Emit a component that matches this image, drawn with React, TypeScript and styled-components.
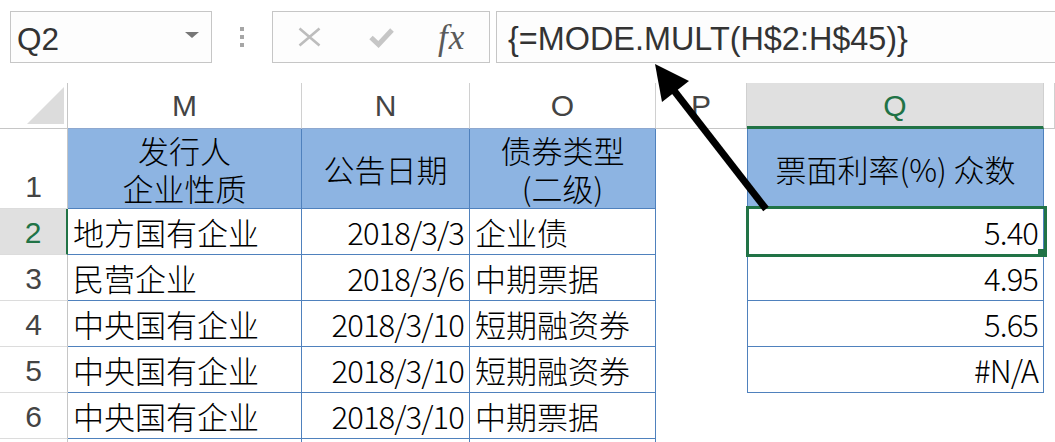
import React from "react";
import styled, { createGlobalStyle } from "styled-components";

const GlobalStyle = createGlobalStyle`
  html, body { margin: 0; padding: 0; background: #fff; }
  body { overflow: hidden; font-family: "Liberation Sans", Arial, sans-serif; }
`;

const GREEN = "#217346";
const BLUE_LINE = "#4f81bd";
const HEAD_FILL = "#8db4e2";
const CJK = `"Noto Sans CJK SC", "Noto Sans", sans-serif`;

const Page = styled.div`
  position: relative;
  width: 1055px;
  height: 442px;
  overflow: hidden;
  background: #fff;
`;

/* ---------- formula bar ---------- */
const FormulaBar = styled.div`
  display: flex;
  align-items: flex-start;
  height: 83px;
  padding: 11px 0 0 10px;
  box-sizing: border-box;
`;

const FieldBox = styled.div`
  box-sizing: border-box;
  height: 52px;
  border: 1px solid #c6c6c6;
  background: #fdfdfd;
  display: flex;
  align-items: center;
`;

const NameBox = styled(FieldBox)`
  width: 202px;
  justify-content: space-between;
  padding: 0 12px 0 6px;
`;

const BarText = styled.span<{ $size: number }>`
  font-family: "Liberation Sans", Arial, sans-serif;
  font-size: ${(p) => p.$size}px;
  line-height: 36px;
  color: #333;
  padding-top: 4px;
  white-space: nowrap;
`;

const DropTriangle = styled.span`
  width: 0;
  height: 0;
  margin-top: -4px;
  border-left: 7px solid transparent;
  border-right: 7px solid transparent;
  border-top: 6px solid #777;
`;

const Grip = styled.div`
  width: 60px;
  height: 52px;
  display: flex;
  flex-direction: column;
  align-items: center;
  justify-content: center;
  gap: 4px;
`;

const GripDot = styled.span`
  width: 4px;
  height: 4px;
  background: #a6a6a6;
`;

const FxBox = styled(FieldBox)`
  width: 218px;
  padding-left: 25px;
`;

const IconSlot = styled.span<{ $gap: number }>`
  display: flex;
  margin-right: ${(p) => p.$gap}px;
`;

const FxLabel = styled.span`
  font-family: "Liberation Serif", "Times New Roman", serif;
  font-style: italic;
  font-size: 35px;
  color: #5a5a5a;
  line-height: 34px;
  padding-top: 1px;
  letter-spacing: 1px;
`;

const FormulaBox = styled(FieldBox)`
  flex: 1;
  margin-left: 6px;
  margin-right: -10px;
  padding-left: 11px;
`;

/* ---------- sheet grid ---------- */
const Sheet = styled.div`
  display: grid;
  grid-template-columns: 68px 234px 168px 186px 91px 297px 1fr;
  grid-template-rows: 46px 80px repeat(6, 46px);
`;

const Corner = styled.div`
  box-sizing: border-box;
  border-right: 1px solid #c6c6c6;
  border-bottom: 1px solid #c6c6c6;
  display: flex;
  align-items: flex-end;
  justify-content: flex-end;
  padding: 0 3px 4px 0;
`;

const CornerTriangle = styled.span`
  width: 0;
  height: 0;
  border-left: 37px solid transparent;
  border-bottom: 37px solid #dcdcdc;
`;

const ColHead = styled.div<{ $sel?: boolean; $line?: string }>`
  box-sizing: border-box;
  display: flex;
  align-items: center;
  justify-content: center;
  font-family: "Liberation Sans", Arial, sans-serif;
  font-size: 30px;
  color: ${(p) => (p.$sel ? GREEN : "#444")};
  background: ${(p) => (p.$sel ? "#e0e0e0" : "#fff")};
  border-right: 1px solid #d0d0d0;
  border-bottom: ${(p) =>
    p.$sel ? `3px solid ${GREEN}` : `1px solid ${p.$line ?? "#c6c6c6"}`};
  padding-top: ${(p) => (p.$sel ? "2px" : "0")};
`;

const RowHead = styled.div<{ $sel?: boolean }>`
  box-sizing: border-box;
  display: flex;
  align-items: flex-end;
  justify-content: center;
  padding-bottom: 4px;
  font-family: "Liberation Sans", Arial, sans-serif;
  font-size: 30px;
  line-height: 34px;
  color: ${(p) => (p.$sel ? GREEN : "#444")};
  background: ${(p) => (p.$sel ? "#e0e0e0" : "#fff")};
  border-bottom: 1px solid #dcdcdc;
  border-right: ${(p) => (p.$sel ? `2px solid ${GREEN}` : "1px solid #c6c6c6")};
`;

type Frame = "table" | "qtable" | "none";
type Align = "left" | "right" | "center";

const Cell = styled.div<{ $frame: Frame; $align?: Align; $head?: boolean; $active?: boolean }>`
  box-sizing: border-box;
  position: ${(p) => (p.$active ? "relative" : "static")};
  display: flex;
  align-items: center;
  justify-content: ${(p) =>
    p.$align === "right" ? "flex-end" : p.$align === "center" ? "center" : "flex-start"};
  text-align: ${(p) => p.$align ?? "left"};
  padding: 0 5px;
  font-family: ${CJK};
  font-weight: 300;
  font-size: 31px;
  line-height: ${(p) => (p.$head ? "38px" : "45px")};
  white-space: pre-line;
  color: #000;
  background: ${(p) => (p.$head ? HEAD_FILL : "#fff")};
  border-right: ${(p) => (p.$frame === "none" ? "none" : `1px solid ${BLUE_LINE}`)};
  border-bottom: ${(p) => (p.$frame === "none" ? "none" : `1px solid ${BLUE_LINE}`)};
  border-left: ${(p) => (p.$frame === "qtable" ? `1px solid ${BLUE_LINE}` : "none")};
`;

const Num = styled.span`
  letter-spacing: -0.9px;
`;

const Selection = styled.div`
  position: absolute;
  z-index: 2;
  left: -2px;
  top: -3px;
  width: 301px;
  height: 51px;
  box-sizing: border-box;
  border: 3px solid ${GREEN};
  pointer-events: none;
`;

const FillHandle = styled.div`
  position: absolute;
  z-index: 3;
  right: -3px;
  bottom: -2px;
  width: 8px;
  height: 7px;
  background: ${GREEN};
`;

const ArrowLayer = styled.svg`
  position: absolute;
  left: 0;
  top: 0;
  z-index: 5;
  pointer-events: none;
`;

/* ---------- data ---------- */
const columns = [
  { key: "M", line: "#8ea8cf" },
  { key: "N", line: "#8ea8cf" },
  { key: "O", line: "#8ea8cf" },
  { key: "P" },
  { key: "Q", sel: true },
  { key: "" },
];

type Row = { n: string; m: string; d: string; t: string; q?: string };

const rows: Row[] = [
  { n: "2", m: "地方国有企业", d: "2018/3/3", t: "企业债", q: "5.40" },
  { n: "3", m: "民营企业", d: "2018/3/6", t: "中期票据", q: "4.95" },
  { n: "4", m: "中央国有企业", d: "2018/3/10", t: "短期融资券", q: "5.65" },
  { n: "5", m: "中央国有企业", d: "2018/3/10", t: "短期融资券", q: "#N/A" },
  { n: "6", m: "中央国有企业", d: "2018/3/10", t: "中期票据" },
  { n: "", m: "", d: "", t: "" },
];

const CloseIcon = () => (
  <svg width="23" height="20" viewBox="0 0 23 20">
    <path d="M1.5 1.5 L21.5 18.5 M21.5 1.5 L1.5 18.5" stroke="#bdbdbd" strokeWidth="2.6" fill="none" />
  </svg>
);

const CheckIcon = () => (
  <svg width="25" height="21" viewBox="0 0 25 21">
    <path d="M2 10.5 L9.5 17.5 L23 3" stroke="#c6c6c6" strokeWidth="5" fill="none" strokeLinejoin="miter" />
  </svg>
);

export default function App() {
  return (
    <Page>
      <GlobalStyle />
      <FormulaBar>
        <NameBox>
          <BarText $size={31.5}>Q2</BarText>
          <DropTriangle />
        </NameBox>
        <Grip>
          <GripDot />
          <GripDot />
          <GripDot />
        </Grip>
        <FxBox>
          <IconSlot $gap={48}>
            <CloseIcon />
          </IconSlot>
          <IconSlot $gap={44}>
            <CheckIcon />
          </IconSlot>
          <FxLabel>fx</FxLabel>
        </FxBox>
        <FormulaBox>
          <BarText $size={32.4}>{"{=MODE.MULT(H$2:H$45)}"}</BarText>
        </FormulaBox>
      </FormulaBar>

      <Sheet>
        <Corner>
          <CornerTriangle />
        </Corner>
        {columns.map((c, i) => (
          <ColHead key={i} $sel={c.sel} $line={c.line}>
            {c.key}
          </ColHead>
        ))}

        <RowHead>1</RowHead>
        <Cell $frame="table" $head $align="center">{"发行人\n企业性质"}</Cell>
        <Cell $frame="table" $head $align="center">公告日期</Cell>
        <Cell $frame="table" $head $align="center">{"债券类型\n(二级)"}</Cell>
        <Cell $frame="none" />
        <Cell $frame="qtable" $head $align="center">票面利率(%) 众数</Cell>
        <Cell $frame="none" />

        {rows.map((r, i) => (
          <React.Fragment key={i}>
            <RowHead $sel={i === 0}>{r.n}</RowHead>
            <Cell $frame="table">{r.m}</Cell>
            <Cell $frame="table" $align="right">
              <Num>{r.d}</Num>
            </Cell>
            <Cell $frame="table">{r.t}</Cell>
            <Cell $frame="none" />
            {r.q !== undefined ? (
              <Cell $frame="qtable" $align="right" $active={i === 0}>
                <Num>{r.q}</Num>
                {i === 0 && (
                  <>
                    <Selection />
                    <FillHandle />
                  </>
                )}
              </Cell>
            ) : (
              <Cell $frame="none" />
            )}
            <Cell $frame="none" />
          </React.Fragment>
        ))}
      </Sheet>

      <ArrowLayer width="1055" height="442" viewBox="0 0 1055 442">
        <line x1="766" y1="209" x2="672" y2="88" stroke="#000" strokeWidth="7" />
        <polygon points="655,64 662,102 689,81" fill="#000" />
      </ArrowLayer>
    </Page>
  );
}
